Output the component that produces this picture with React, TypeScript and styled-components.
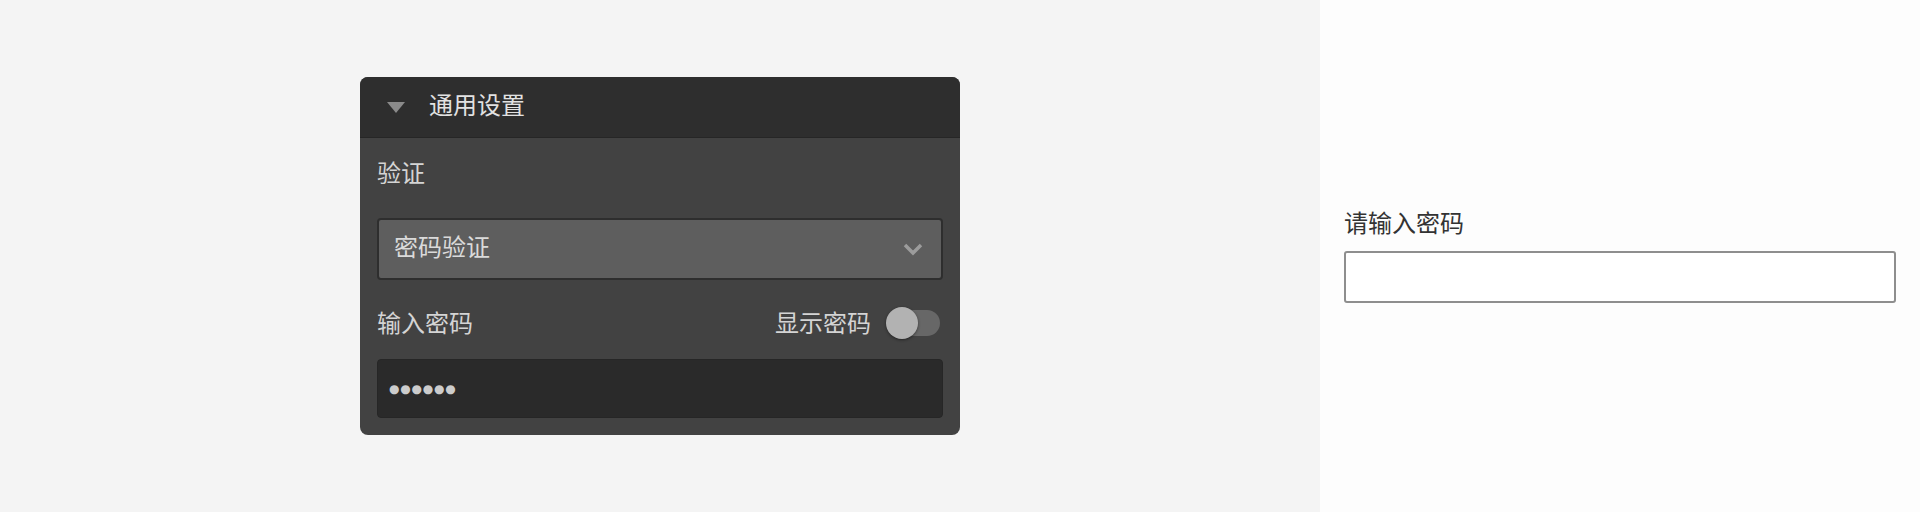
import React from "react";
import styled, { createGlobalStyle } from "styled-components";

const GlobalStyle = createGlobalStyle`
  html, body { margin: 0; padding: 0; }
  body {
    font-family: "Noto Sans", "Noto Sans CJK SC", sans-serif;
    background: #f4f4f4;
  }
`;

const Page = styled.div`
  display: grid;
  grid-template-columns: 1320px 600px;
  height: 512px;
  width: 1920px;
`;

const Stage = styled.div`
  background: #f4f4f4;
  display: flex;
  align-items: center;
  justify-content: center;
`;

const Panel = styled.section`
  width: 600px;
  background: #424242;
  border-radius: 8px;
  overflow: hidden;
  display: flex;
  flex-direction: column;
`;

const Header = styled.div`
  height: 61px;
  box-sizing: border-box;
  background: #2e2e2e;
  border-bottom: 1px solid #262626;
  display: flex;
  align-items: center;
  padding-left: 27px;
  gap: 24px;
  color: #e2e2e2;
  font-size: 24px;
`;

const HeaderTitle = styled.span`
  line-height: 36px;
  margin-top: -4px;
`;

const Caret = styled.span`
  width: 0;
  height: 0;
  border-left: 9px solid transparent;
  border-right: 9px solid transparent;
  border-top: 11px solid #8a8a8a;
  margin-top: 1px;
`;

const Body = styled.div`
  padding: 17px 17px 17px 17px;
  display: flex;
  flex-direction: column;
`;

const Label = styled.div`
  font-size: 24px;
  line-height: 36px;
  color: #d4d4d4;
`;

const Select = styled.div`
  margin-top: 27px;
  height: 62px;
  box-sizing: border-box;
  background: #5e5e5e;
  border: 2px solid #2e2e2e;
  border-radius: 4px;
  display: flex;
  align-items: center;
  justify-content: space-between;
  padding: 0 18px 0 15px;
  color: #dadada;
  font-size: 24px;
`;

const SelectValue = styled.span`
  line-height: 36px;
  margin-top: -4px;
`;

const Row = styled.div`
  margin-top: 25px;
  height: 36px;
  display: flex;
  align-items: center;
  justify-content: space-between;
`;

const ToggleWrap = styled.div`
  display: flex;
  align-items: center;
  gap: 15px;
  padding-right: 3px;
`;

const Track = styled.div`
  position: relative;
  width: 52px;
  height: 26px;
  border-radius: 13px;
  background: #676767;
  margin-left: 2px;
`;

const Knob = styled.div`
  position: absolute;
  left: -2px;
  top: -3px;
  width: 32px;
  height: 32px;
  border-radius: 50%;
  background: #b2b2b2;
  box-shadow: 0 1px 3px rgba(0, 0, 0, 0.45);
`;

const Password = styled.div`
  margin-top: 18px;
  height: 59px;
  box-sizing: border-box;
  background: #2a2a2a;
  border: 1px solid #262626;
  border-radius: 4px;
  display: flex;
  align-items: center;
  padding-left: 11px;
  color: #cccccc;
  font-family: "DejaVu Sans", sans-serif;
  font-size: 12px;
  letter-spacing: 0.8px;
`;

const Side = styled.div`
  background: #fdfdfd;
  display: flex;
  flex-direction: column;
  justify-content: center;
  padding: 0 24px;
`;

const SideLabel = styled.label`
  font-size: 24px;
  line-height: 36px;
  color: #333333;
  margin-top: -4px;
`;

const SideInput = styled.input`
  margin-top: 10px;
  height: 52px;
  box-sizing: border-box;
  width: 552px;
  border: 2px solid #8e8e8e;
  border-radius: 3px;
  background: #ffffff;
  outline: none;
`;

const Chevron = () => (
  <svg width="20" height="13" viewBox="0 0 20 13">
    <path d="M2 2 L10 10 L18 2" fill="none" stroke="#9c9c9c" strokeWidth="3.5" />
  </svg>
);

export default function App() {
  return (
    <>
      <GlobalStyle />
      <Page>
        <Stage>
          <Panel>
            <Header>
              <Caret />
              <HeaderTitle>通用设置</HeaderTitle>
            </Header>
            <Body>
              <Label>验证</Label>
              <Select>
                <SelectValue>密码验证</SelectValue>
                <Chevron />
              </Select>
              <Row>
                <Label>输入密码</Label>
                <ToggleWrap>
                  <Label>显示密码</Label>
                  <Track>
                    <Knob />
                  </Track>
                </ToggleWrap>
              </Row>
              <Password>●●●●●●</Password>
            </Body>
          </Panel>
        </Stage>
        <Side>
          <SideLabel>请输入密码</SideLabel>
          <SideInput type="text" />
        </Side>
      </Page>
    </>
  );
}
